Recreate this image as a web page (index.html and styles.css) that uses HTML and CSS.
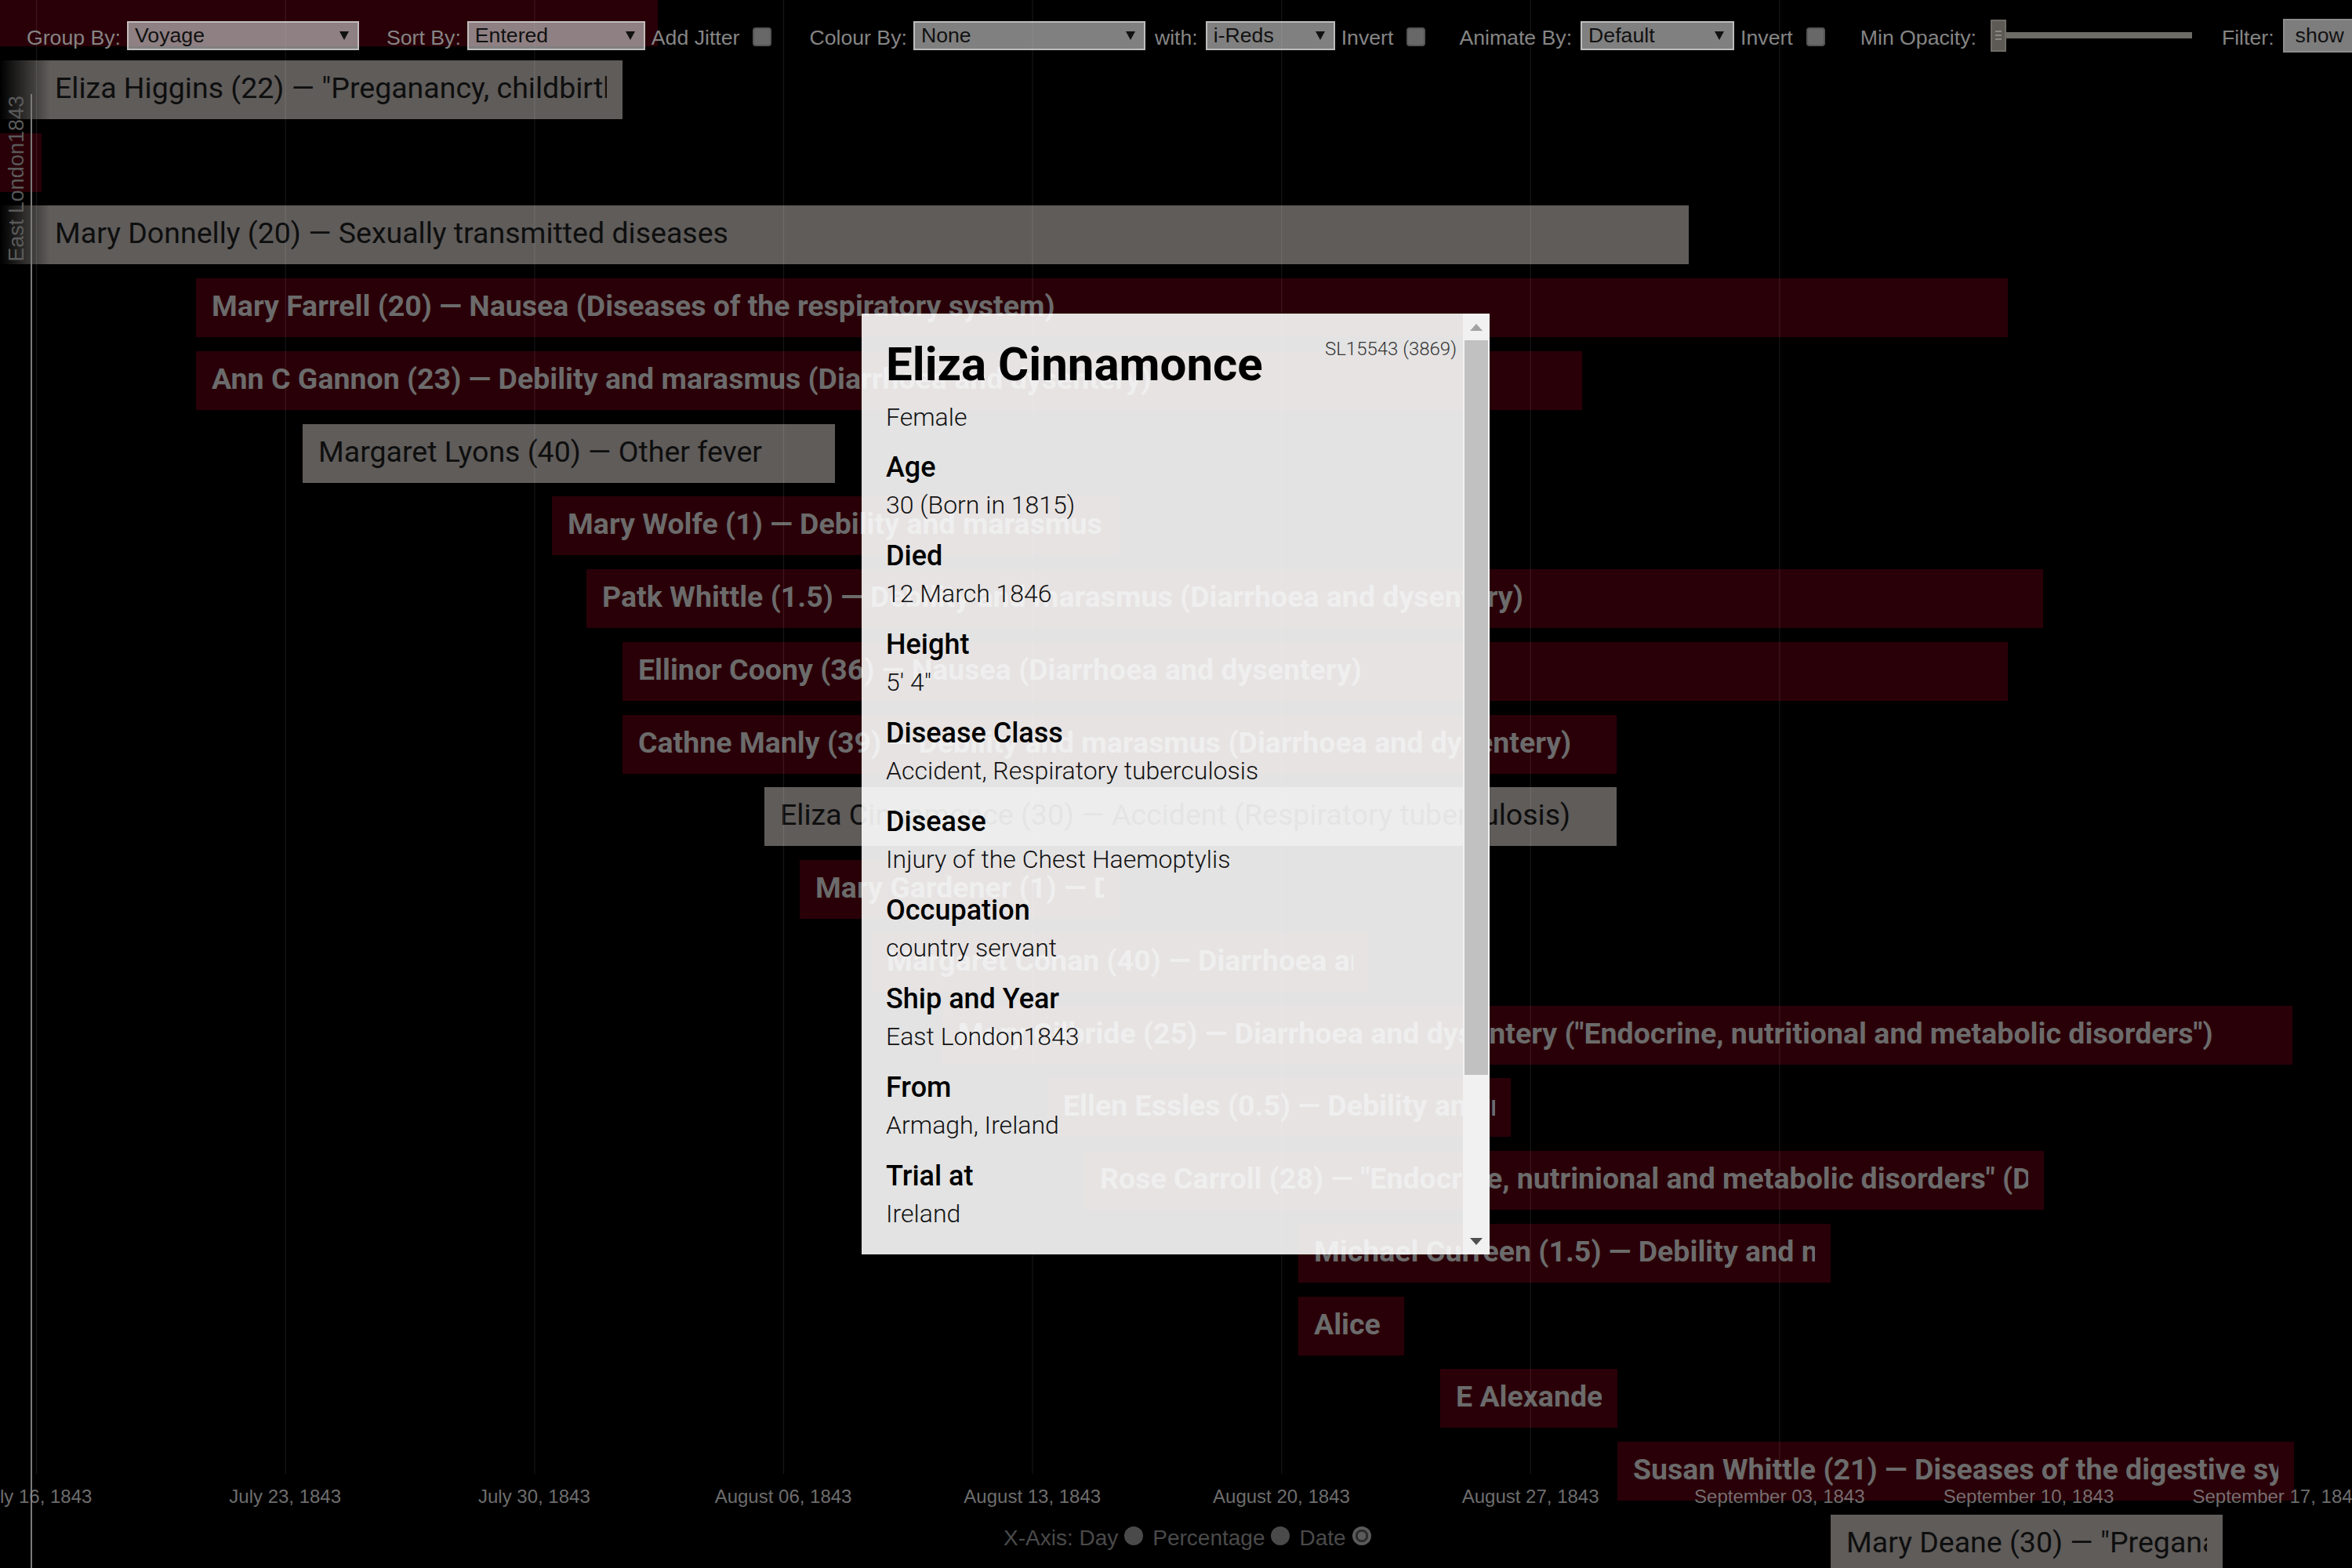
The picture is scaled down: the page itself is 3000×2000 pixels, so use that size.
FILE: index.html
```html
<!DOCTYPE html>
<html lang="en">
<head>
<meta charset="utf-8">
<title>Convict deaths timeline</title>
<link rel="stylesheet" href="styles.css">
</head>
<body>
<div class="chart">
  <div class="rows">
    <div class="row"><div class="bar red" style="margin-left:0;width:839px"><span></span></div></div>
    <div class="row"><div class="bar grey lead" style="margin-left:0;width:794px"><span>Eliza Higgins (22) — "Preganancy, childbirth and the puerperium"</span></div></div>
    <div class="row"><div class="bar red" style="margin-left:0;width:53px"><span></span></div></div>
    <div class="row"><div class="bar grey lead" style="margin-left:0;width:2154px"><span>Mary Donnelly (20) — Sexually transmitted diseases</span></div></div>
    <div class="row"><div class="bar red" style="margin-left:250px;width:2311px"><span>Mary Farrell (20) — Nausea (Diseases of the respiratory system)</span></div></div>
    <div class="row"><div class="bar red" style="margin-left:250px;width:1768px"><span>Ann C Gannon (23) — Debility and marasmus (Diarrhoea and dysentery)</span></div></div>
    <div class="row"><div class="bar grey" style="margin-left:386px;width:679px"><span>Margaret Lyons (40) — Other fever</span></div></div>
    <div class="row"><div class="bar red" style="margin-left:704px;width:724px"><span>Mary Wolfe (1) — Debility and marasmus</span></div></div>
    <div class="row"><div class="bar red" style="margin-left:748px;width:1858px"><span>Patk Whittle (1.5) — Debility and marasmus (Diarrhoea and dysentery)</span></div></div>
    <div class="row"><div class="bar red" style="margin-left:794px;width:1767px"><span>Ellinor Coony (36) — Nausea (Diarrhoea and dysentery)</span></div></div>
    <div class="row"><div class="bar red" style="margin-left:794px;width:1268px"><span>Cathne Manly (39) — Debility and marasmus (Diarrhoea and dysentery)</span></div></div>
    <div class="row"><div class="bar grey" style="margin-left:975px;width:1087px"><span>Eliza Cinnamonce (30) — Accident (Respiratory tuberculosis)</span></div></div>
    <div class="row"><div class="bar red" style="margin-left:1020px;width:408px"><span>Mary Gardener (1) — Debility and marasmus</span></div></div>
    <div class="row"><div class="bar red" style="margin-left:1111px;width:635px"><span>Margaret Conan (40) — Diarrhoea and dysentery</span></div></div>
    <div class="row"><div class="bar red" style="margin-left:1202px;width:1722px"><span>Mary Gilbride (25) — Diarrhoea and dysentery ("Endocrine, nutritional and metabolic disorders")</span></div></div>
    <div class="row"><div class="bar red" style="margin-left:1336px;width:591px"><span>Ellen Essles (0.5) — Debility and marasmus</span></div></div>
    <div class="row"><div class="bar red" style="margin-left:1383px;width:1224px"><span>Rose Carroll (28) — "Endocrine, nutrinional and metabolic disorders" (Diarrhoea and dysentery)</span></div></div>
    <div class="row"><div class="bar red" style="margin-left:1656px;width:679px"><span>Michael Curreen (1.5) — Debility and marasmus</span></div></div>
    <div class="row"><div class="bar red" style="margin-left:1656px;width:135px"><span>Alice Lynch (2) — Debility</span></div></div>
    <div class="row"><div class="bar red" style="margin-left:1837px;width:226px"><span>E Alexander (2) — Debility</span></div></div>
    <div class="row"><div class="bar red" style="margin-left:2063px;width:863px"><span>Susan Whittle (21) — Diseases of the digestive system</span></div></div>
    <div class="row"><div class="bar grey" style="margin-left:2335px;width:500px"><span>Mary Deane (30) — "Preganancy, childbirth and the puerperium"</span></div></div>
  </div>

  <div class="gridlines"></div>

  <div class="group-line"></div>
  <div class="group-label">East London1843</div>

  <div class="axis">
    <span>July 16, 1843</span>
    <span>July 23, 1843</span>
    <span>July 30, 1843</span>
    <span>August 06, 1843</span>
    <span>August 13, 1843</span>
    <span>August 20, 1843</span>
    <span>August 27, 1843</span>
    <span>September 03, 1843</span>
    <span>September 10, 1843</span>
    <span>September 17, 1843</span>
  </div>

  <div class="xaxis">
    <span>X-Axis: Day</span><i class="radio"></i>
    <span>Percentage</span><i class="radio"></i>
    <span>Date</span><i class="radio on"></i>
  </div>

  <div class="controls">
    <div class="grp">
      <span class="lbl">Group By:</span>
      <div class="select w-group"><span>Voyage</span><i class="caret"></i></div>
    </div>
    <div class="grp sort">
      <span class="lbl">Sort By:</span>
      <div class="select w-sort"><span>Entered</span><i class="caret"></i></div>
      <span class="lbl inline">Add Jitter</span>
      <i class="cb"></i>
    </div>
    <div class="grp colour">
      <span class="lbl">Colour By:</span>
      <div class="select w-colour"><span>None</span><i class="caret"></i></div>
      <span class="lbl inline with">with:</span>
      <div class="select w-scale"><span>i-Reds</span><i class="caret"></i></div>
      <span class="lbl inline">Invert</span>
      <i class="cb"></i>
    </div>
    <div class="grp animate">
      <span class="lbl spaced">Animate By:</span>
      <div class="select w-animate"><span>Default</span><i class="caret"></i></div>
      <span class="lbl inline">Invert</span>
      <i class="cb"></i>
    </div>
    <div class="grp opacity">
      <span class="lbl wide">Min Opacity:</span>
      <div class="slider"><i class="thumb"><b></b><b></b><b></b></i><i class="track"></i></div>
    </div>
    <div class="grp filter">
      <span class="lbl spaced">Filter:</span>
      <div class="btn">show</div>
    </div>
  </div>

  <div class="popup">
    <div class="popup-body">
      <div class="pop-head">
        <h1 class="pop-title">Eliza Cinnamonce</h1>
        <span class="pop-id">SL15543 (3869)</span>
      </div>
      <p class="pop-sex">Female</p>
      <dl class="fields">
        <dt>Age</dt><dd>30 (Born in 1815)</dd>
        <dt>Died</dt><dd>12 March 1846</dd>
        <dt>Height</dt><dd>5′ 4″</dd>
        <dt>Disease Class</dt><dd>Accident, Respiratory tuberculosis</dd>
        <dt>Disease</dt><dd>Injury of the Chest Haemoptylis</dd>
        <dt>Occupation</dt><dd>country servant</dd>
        <dt>Ship and Year</dt><dd>East London1843</dd>
        <dt>From</dt><dd>Armagh, Ireland</dd>
        <dt>Trial at</dt><dd>Ireland</dd>
      </dl>
    </div>
    <div class="scrollbar">
      <div class="sb-btn"><i class="arrow-up"></i></div>
      <div class="sb-thumb"></div>
      <div class="sb-track"></div>
      <div class="sb-btn"><i class="arrow-down"></i></div>
    </div>
  </div>
</div>
</body>
</html>
```

FILE: styles.css
```css
* { box-sizing: border-box; }

html, body {
  margin: 0;
  padding: 0;
  background: #000;
}

body {
  width: 3000px;
  height: 2000px;
  overflow: hidden;
  font-family: Roboto, "Liberation Sans", Arial, sans-serif;
}

.chart {
  position: relative;
  width: 3000px;
  height: 2000px;
  overflow: hidden;
  background: #000;
}

/* ---------- timeline rows ---------- */
.rows {
  display: flex;
  flex-direction: column;
  gap: 17.75px;
  margin-top: -16px;
}

.row {
  height: 75px;
  display: flex;
}

.bar {
  flex: none;
  height: 75px;
  display: flex;
  align-items: center;
  padding: 0 20px 5px;
  font-size: 37.5px;
}

.bar span {
  min-width: 0;
  overflow: hidden;
  white-space: nowrap;
}

.bar.red {
  background: #2a0008;
  color: #6b6b6b;
  font-weight: 700;
}

.bar.grey {
  background: #5f5c5a;
  color: #0e0e0e;
  font-weight: 400;
}

.bar.lead {
  padding-left: 70px;
  background: linear-gradient(to right, #000 0, #5f5c5a 64px);
}

/* ---------- grid & axis ---------- */
.gridlines {
  position: absolute;
  top: 0;
  left: 0;
  width: 3000px;
  height: 1880px;
  background-image: repeating-linear-gradient(to right, rgba(255,255,255,0.09) 0 1px, transparent 1px 317.7px);
  background-position: 46px 0;
  pointer-events: none;
}

.group-line {
  position: absolute;
  left: 39px;
  top: 120px;
  bottom: 0;
  width: 2px;
  background: #7a7a7a;
}

.group-label {
  position: absolute;
  left: 8px;
  top: 122px;
  writing-mode: vertical-rl;
  transform: rotate(180deg);
  font-family: "Liberation Sans", Arial, sans-serif;
  font-size: 27px;
  line-height: 26px;
  color: #5a5a5a;
  white-space: nowrap;
}

.axis {
  position: absolute;
  top: 1894px;
  left: -112.85px;
  display: flex;
  font-family: "Liberation Sans", Arial, sans-serif;
  font-size: 24px;
  line-height: 30px;
  color: rgba(140, 140, 140, 0.8);
}

.axis span {
  flex: none;
  width: 317.7px;
  text-align: center;
  white-space: nowrap;
}

.xaxis {
  position: absolute;
  left: 1280px;
  top: 1946px;
  display: flex;
  align-items: flex-start;
  font-family: "Liberation Sans", Arial, sans-serif;
  font-size: 28px;
  line-height: 32px;
  color: #4a4a4a;
  white-space: nowrap;
}

.radio {
  width: 24px;
  height: 24px;
  border-radius: 50%;
  background: #4a4a4a;
  margin: 1px 12px 0 8px;
}

.radio.on {
  background: radial-gradient(circle, #5a5a5a 0 5px, #2c2c2c 5.5px 8px, #5a5a5a 8.5px);
}

/* ---------- control bar ---------- */
.controls {
  position: absolute;
  top: 0;
  left: 0;
  right: 0;
  height: 90px;
  padding-left: 34px;
  display: flex;
  align-items: center;
  font-family: "Liberation Sans", Arial, sans-serif;
  font-size: 26.67px;
  color: #858585;
  white-space: nowrap;
}

.grp {
  display: flex;
  align-items: center;
  flex: none;
}

.grp.sort { margin-left: 35px; }
.grp.colour { margin-left: 48px; }
.grp.animate { margin-left: 43px; }
.grp.opacity { margin-left: 45px; }
.grp.filter { margin-left: 38px; }

.lbl {
  padding-top: 6px;
  margin-right: 8px;
}

.lbl.spaced { margin-right: 11px; }

.lbl.inline {
  margin-left: 8px;
  margin-right: 0;
}

.lbl.with {
  margin-left: 12px;
  margin-right: 10px;
}

.lbl.wide { margin-right: 18px; }

.select {
  height: 37px;
  display: flex;
  align-items: center;
  justify-content: space-between;
  padding: 0 11px 0 8px;
  background: rgba(205, 205, 205, 0.625);
  border: 2px solid rgba(228, 228, 228, 0.6);
  color: #111;
}

.w-group { width: 296px; }
.w-sort { width: 227px; }
.w-colour { width: 296px; }
.w-scale { width: 165px; }
.w-animate { width: 196px; }

.caret {
  width: 0;
  height: 0;
  border-left: 6px solid transparent;
  border-right: 6px solid transparent;
  border-top: 11px solid #111;
}

.cb {
  width: 24px;
  height: 24px;
  margin: 3px 0 0 17px;
  border-radius: 4px;
  background: #686868;
  border: 2px solid #555;
}

.slider {
  width: 257px;
  height: 41px;
  display: flex;
  align-items: center;
}

.thumb {
  width: 20px;
  height: 41px;
  background: #5d5a55;
  border: 2px solid #6f6c67;
  display: flex;
  flex-direction: column;
  justify-content: center;
  align-items: center;
  gap: 3px;
}

.thumb b {
  width: 8px;
  height: 2px;
  background: #8a8781;
}

.track {
  flex: 1;
  height: 8px;
  background: #6d6b65;
}

.btn {
  height: 43px;
  display: flex;
  align-items: center;
  padding: 0 16px 0 14px;
  background: #7d7d7d;
  border: 2px solid #8d8d8d;
  color: #111;
}

/* ---------- detail popup ---------- */
.popup {
  position: absolute;
  left: 1099px;
  top: 400px;
  width: 801px;
  height: 1200px;
  display: flex;
}

.popup-body {
  flex: 1;
  overflow: hidden;
  padding: 30px 8px 0 31px;
  background: rgba(255, 255, 255, 0.89);
  color: #000;
  font-family: Roboto, "Liberation Sans", Arial, sans-serif;
}

.pop-head {
  display: flex;
  justify-content: space-between;
  align-items: flex-start;
}

.pop-title {
  margin: 3px 0 0;
  font-size: 60px;
  line-height: 64px;
  font-weight: 700;
  color: #000;
}

.pop-id {
  font-size: 24px;
  line-height: 30px;
  font-weight: 300;
  color: #333;
}

.pop-sex {
  margin: 11px 0 17px;
  font-size: 32px;
  line-height: 48px;
  font-weight: 300;
  color: #111;
}

.fields {
  margin: 0;
}

.fields dt {
  font-size: 36px;
  line-height: 47px;
  font-weight: 500;
  color: #000;
}

.fields dd {
  margin: 0 0 17px;
  font-size: 32px;
  line-height: 49px;
  font-weight: 300;
  color: #111;
}

.scrollbar {
  width: 34px;
  flex: none;
  display: flex;
  flex-direction: column;
  background: #f1f1f1;
}

.sb-btn {
  height: 34px;
  flex: none;
  display: flex;
  align-items: center;
  justify-content: center;
}

.arrow-up {
  width: 0;
  height: 0;
  border-left: 8px solid transparent;
  border-right: 8px solid transparent;
  border-bottom: 9px solid #a3a3a3;
}

.arrow-down {
  width: 0;
  height: 0;
  border-left: 8px solid transparent;
  border-right: 8px solid transparent;
  border-top: 9px solid #505050;
}

.sb-thumb {
  height: 937px;
  flex: none;
  margin: 0 2px;
  background: #c1c1c1;
}

.sb-track {
  flex: 1;
}
```
